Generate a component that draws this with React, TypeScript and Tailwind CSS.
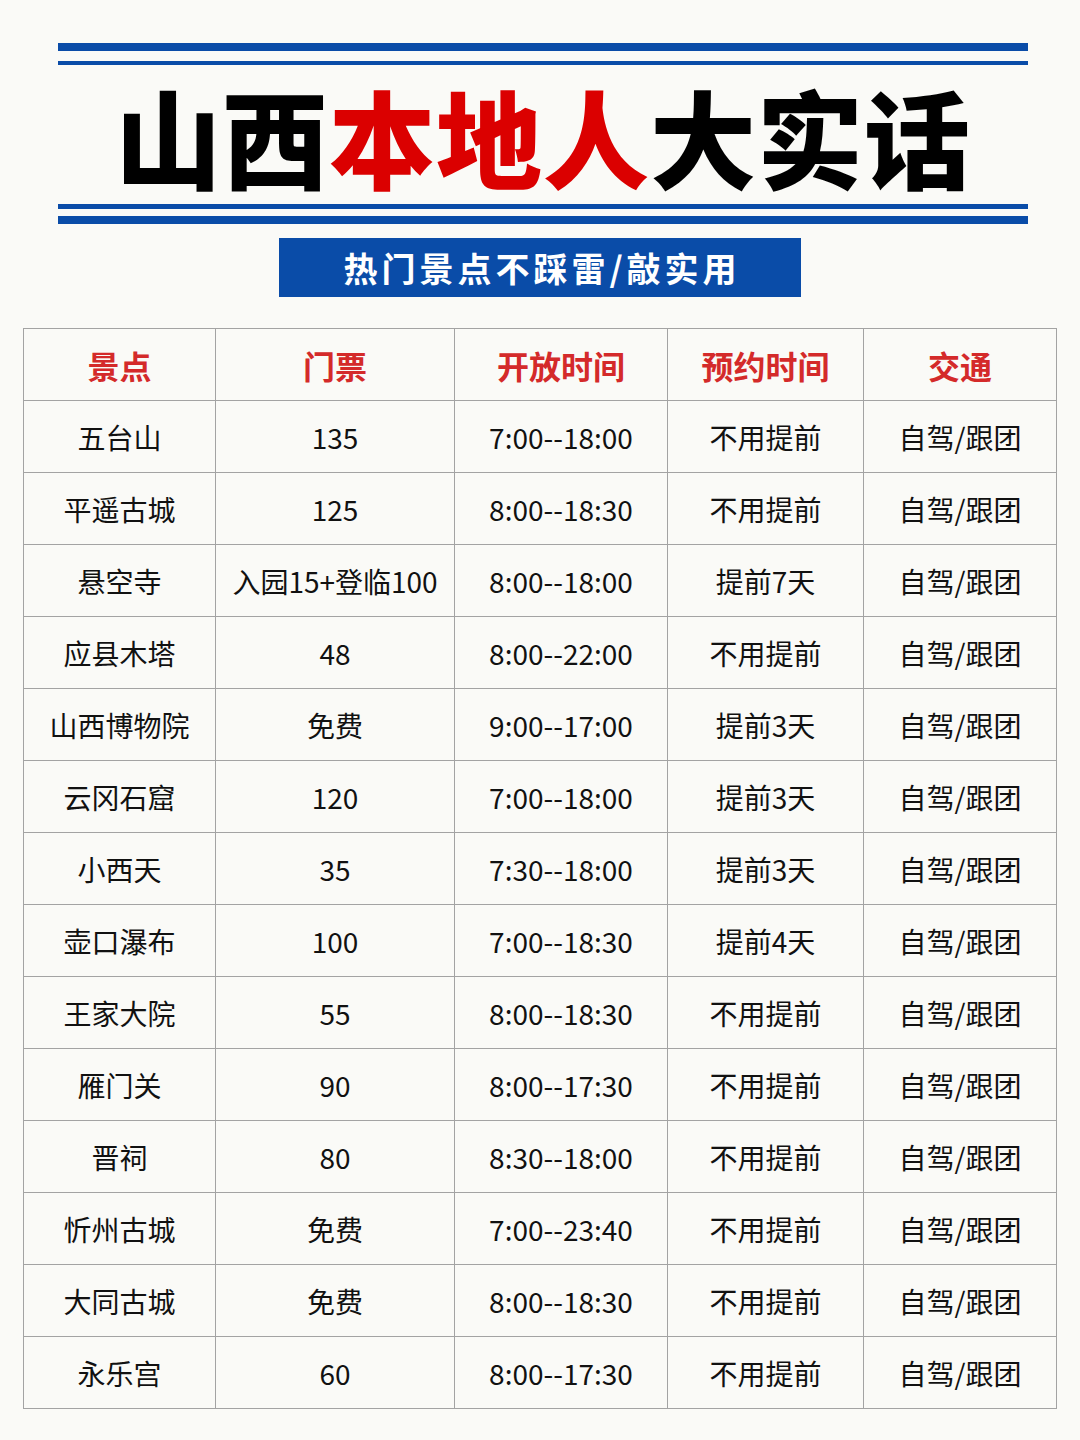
const ROWS: string[][] = [
  ["五台山", "135", "7:00--18:00", "不用提前", "自驾/跟团"],
  ["平遥古城", "125", "8:00--18:30", "不用提前", "自驾/跟团"],
  ["悬空寺", "入园15+登临100", "8:00--18:00", "提前7天", "自驾/跟团"],
  ["应县木塔", "48", "8:00--22:00", "不用提前", "自驾/跟团"],
  ["山西博物院", "免费", "9:00--17:00", "提前3天", "自驾/跟团"],
  ["云冈石窟", "120", "7:00--18:00", "提前3天", "自驾/跟团"],
  ["小西天", "35", "7:30--18:00", "提前3天", "自驾/跟团"],
  ["壶口瀑布", "100", "7:00--18:30", "提前4天", "自驾/跟团"],
  ["王家大院", "55", "8:00--18:30", "不用提前", "自驾/跟团"],
  ["雁门关", "90", "8:00--17:30", "不用提前", "自驾/跟团"],
  ["晋祠", "80", "8:30--18:00", "不用提前", "自驾/跟团"],
  ["忻州古城", "免费", "7:00--23:40", "不用提前", "自驾/跟团"],
  ["大同古城", "免费", "8:00--18:30", "不用提前", "自驾/跟团"],
  ["永乐宫", "60", "8:00--17:30", "不用提前", "自驾/跟团"],
];

const HEADERS = ["景点", "门票", "开放时间", "预约时间", "交通"];
const WIDTHS = [192, 239, 213, 196, 193];

export default function App() {
  return (
    <div
      className="min-h-[1440px] w-[1080px] bg-[#fafaf7] pt-[43px]"
      style={{ fontFamily: '"Noto Sans CJK SC", "Noto Sans", sans-serif' }}
    >
      {/* 标题区 */}
      <div className="ml-[58px] w-[970px]">
        <div className="h-[8px] bg-[#0a4ca8]" />
        <div className="mt-[10px] h-[4px] bg-[#0a4ca8]" />
        <div className="flex h-[139px] items-center justify-center">
          <h1 className="text-[106px] font-black leading-none tracking-[1px] text-black">
            山西<span className="text-[#db0000]">本地人</span>大实话
          </h1>
        </div>
        <div className="h-[5px] bg-[#0a4ca8]" />
        <div className="mt-[7px] h-[8px] bg-[#0a4ca8]" />
      </div>

      <div className="mt-[14px] flex justify-center">
        <div className="flex h-[59px] w-[522px] items-center justify-center bg-[#0a4ca8] pl-[4px] text-[34px] font-bold tracking-[4px] text-white">
          热门景点不踩雷/敲实用
        </div>
      </div>

      {/* 表格 */}
      <table className="ml-[23px] mt-[31px] w-[1033px] table-fixed border-collapse">
        <colgroup>
          {WIDTHS.map((w, i) => (
            <col key={i} style={{ width: w }} />
          ))}
        </colgroup>
        <thead>
          <tr className="h-[72px]">
            {HEADERS.map((h) => (
              <th
                key={h}
                className="border border-[#a3a3a3] p-0 text-center text-[32px] font-bold text-[#d42a2a]"
              >
                {h}
              </th>
            ))}
          </tr>
        </thead>
        <tbody>
          {ROWS.map((row, i) => (
            <tr key={i} className="h-[72px]">
              {row.map((cell, j) => (
                <td
                  key={j}
                  className="whitespace-nowrap border border-[#a3a3a3] p-0 text-center text-[28px] text-[#111]"
                >
                  {cell}
                </td>
              ))}
            </tr>
          ))}
        </tbody>
      </table>
    </div>
  );
}
